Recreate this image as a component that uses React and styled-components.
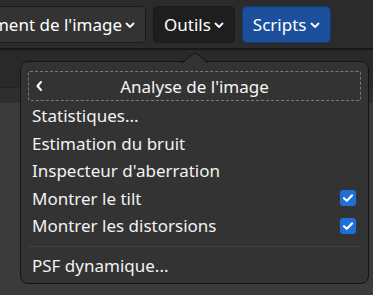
import React from "react";
import styled, { createGlobalStyle } from "styled-components";

const Global = createGlobalStyle`
  html, body { margin: 0; padding: 0; background: #383838; overflow: hidden; }
  body { font-family: "Noto Sans", "Open Sans", sans-serif; }
  #root { width: 373px; height: 295px; }
`;

const Page = styled.div`
  position: relative;
  width: 373px;
  height: 295px;
  display: flex;
  flex-direction: column;
  overflow: hidden;
  background: #3a3a3a;
`;

const Toolbar = styled.div`
  height: 50px;
  flex: none;
  display: flex;
  align-items: flex-start;
  padding-top: 6px;
  gap: 7px;
  background: #2b2b2b;
  border-bottom: 2px solid #181818;
  box-sizing: border-box;
`;

const ToolButton = styled.button`
  height: 37px;
  box-sizing: border-box;
  display: flex;
  align-items: center;
  gap: 2px;
  padding: 0 9px 0 10px;
  border-radius: 5px;
  font-family: "Noto Sans", sans-serif;
  font-size: 17px;
  color: #ffffff;
  cursor: pointer;
  border: 1px solid ${(p) => (p.$variant === "blue" ? "#123b78" : "#1a1a1a")};
  background: ${(p) =>
    p.$variant === "blue" ? "#1b4f9c" : p.$variant === "active" ? "#1e1e1e" : "#333333"};
  margin-left: ${(p) => p.$offset || 0}px;
  white-space: nowrap;
`;

const SubBar = styled.div`
  height: 37px;
  flex: none;
  background: #292929;
  border-bottom: 1px solid #232323;
`;

const SubBar2 = styled.div`
  height: 15px;
  flex: none;
  background: #2e2e2e;
`;

const Canvas = styled.div`
  flex: 1;
  background: #3b3b3b;
`;

const Menu = styled.div`
  position: absolute;
  left: 20px;
  top: 61px;
  width: 349px;
  box-sizing: border-box;
  background: #333333;
  border: 1px solid #141414;
  border-radius: 8px;
  padding: 9px 7px 4px 7px;
  color: #ffffff;
  font-family: "Noto Sans", sans-serif;
  font-size: 17px;
`;

const Arrow = styled.svg`
  position: absolute;
  left: 161px;
  top: -10px;
`;

const Header = styled.div`
  height: 30px;
  box-sizing: border-box;
  border: 1px dashed #7a7a7a;
  border-radius: 2px;
  display: grid;
  grid-template-columns: 24px 1fr 24px;
  align-items: center;
  margin-bottom: 1px;
`;

const HeaderTitle = styled.span`
  text-align: center;
  color: #f4f4f4;
`;

const Item = styled.div`
  height: 27.5px;
  display: flex;
  align-items: center;
  justify-content: space-between;
  padding: 0 5px 0 4px;
  color: #f2f2f2;
  white-space: nowrap;
`;

const Separator = styled.div`
  height: 1px;
  background: #404040;
  margin: 6px 0 5px 0;
`;

const Check = styled.span`
  width: 16px;
  height: 16px;
  border-radius: 3px;
  background: #1f6fd8;
  display: flex;
  align-items: center;
  justify-content: center;
`;

const Chevron = () => (
  <svg width="12" height="12" viewBox="0 0 12 12">
    <path d="M2.5 4.5 L6 8 L9.5 4.5" fill="none" stroke="#fff" strokeWidth="1.8" strokeLinecap="round" strokeLinejoin="round" />
  </svg>
);

const CheckMark = () => (
  <svg width="12" height="12" viewBox="0 0 12 12">
    <path d="M2 6.2 L4.8 8.8 L10 3.4" fill="none" stroke="#fff" strokeWidth="2.2" strokeLinecap="round" strokeLinejoin="round" />
  </svg>
);

const Back = () => (
  <svg width="24" height="14" viewBox="0 0 24 14">
    <path d="M12 3 L8.5 7 L12 11" fill="none" stroke="#fff" strokeWidth="2" strokeLinecap="round" strokeLinejoin="round" />
  </svg>
);

const items = [
  { label: "Statistiques..." },
  { label: "Estimation du bruit" },
  { label: "Inspecteur d'aberration" },
  { label: "Montrer le tilt", checked: true },
  { label: "Montrer les distorsions", checked: true },
];

export default function App() {
  return (
    <>
      <Global />
      <Page>
        <Toolbar>
          <ToolButton $offset={-63}>
            Traitement de l'image
            <Chevron />
          </ToolButton>
          <ToolButton $variant="active">
            Outils
            <Chevron />
          </ToolButton>
          <ToolButton $variant="blue">
            Scripts
            <Chevron />
          </ToolButton>
        </Toolbar>
        <SubBar />
        <SubBar2 />
        <Canvas />
        <Menu>
          <Arrow width="26" height="11" viewBox="0 0 26 11">
            <path d="M0 11 L13 0.5 L26 11" fill="#333333" stroke="#141414" strokeWidth="1" />
          </Arrow>
          <Header>
            <Back />
            <HeaderTitle>Analyse de l'image</HeaderTitle>
            <span />
          </Header>
          {items.map((it) => (
            <Item key={it.label}>
              {it.label}
              {it.checked && (
                <Check>
                  <CheckMark />
                </Check>
              )}
            </Item>
          ))}
          <Separator />
          <Item>PSF dynamique...</Item>
        </Menu>
      </Page>
    </>
  );
}
